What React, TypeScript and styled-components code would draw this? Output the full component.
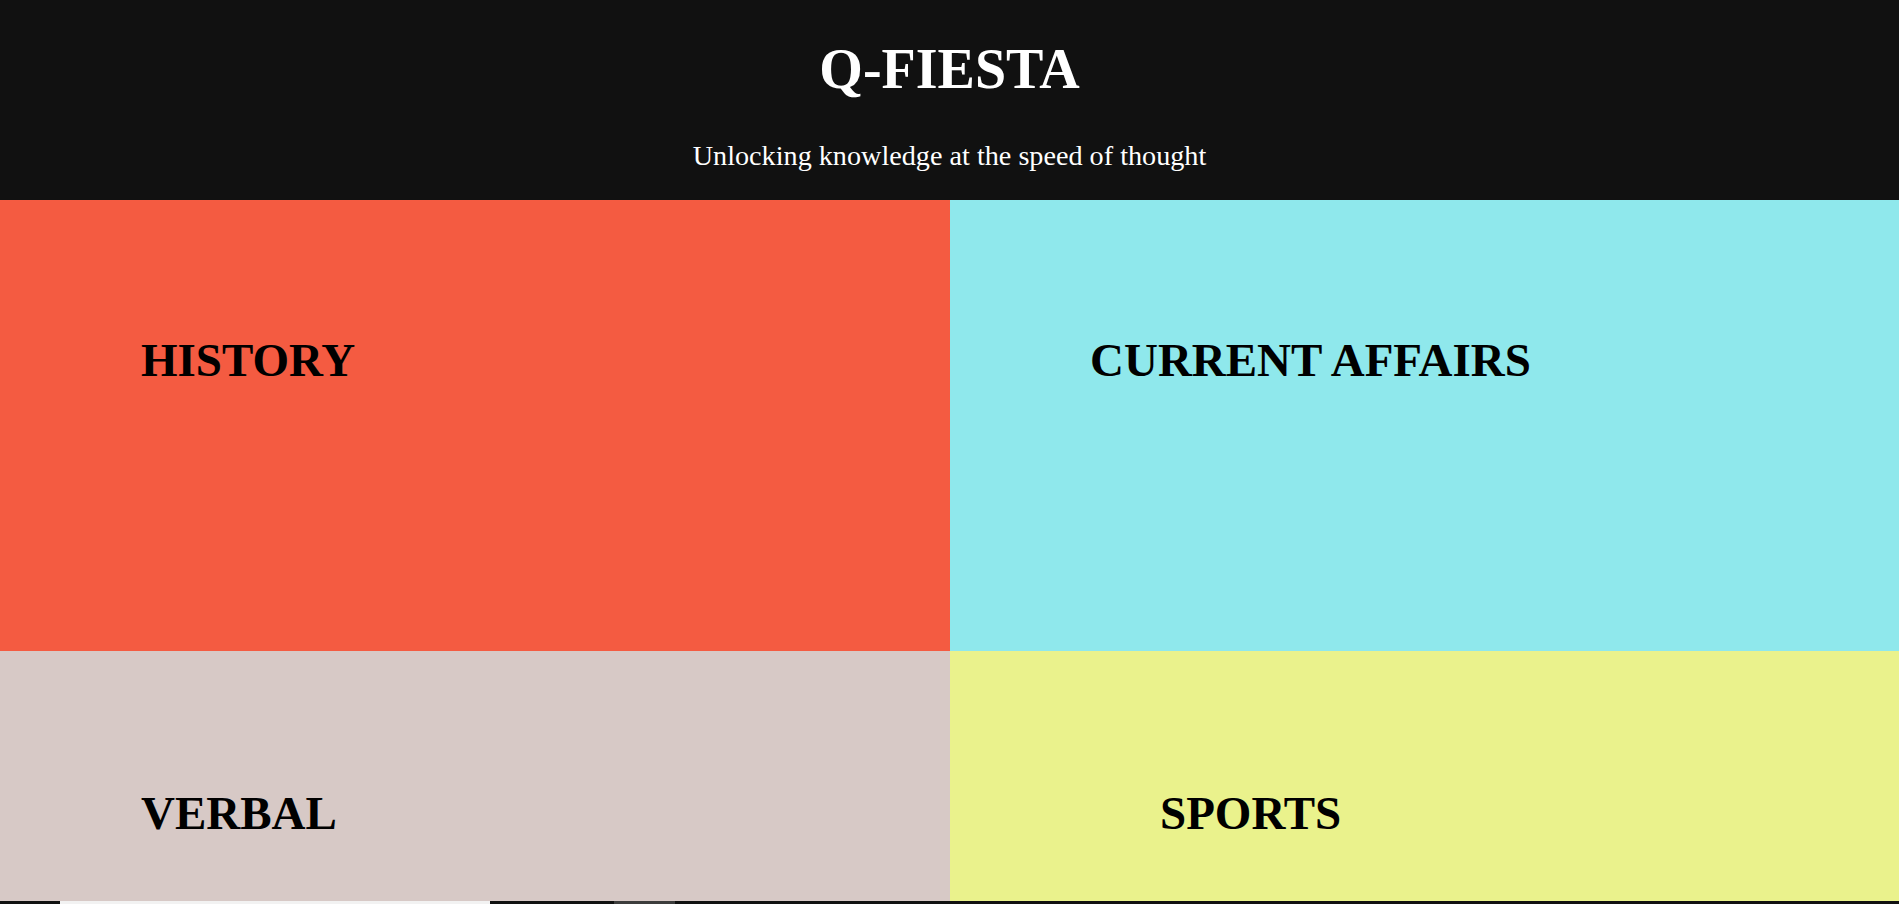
import React from "react";
import styled, { createGlobalStyle } from "styled-components";

const GlobalStyle = createGlobalStyle`
  html, body { margin: 0; padding: 0; background: #111111; }
  body { font-family: "Liberation Serif", "Times New Roman", serif; overflow: hidden; }
  * { box-sizing: border-box; }
`;

const Page = styled.div`
  width: 1899px;
  display: flex;
  flex-direction: column;
`;

const Header = styled.header`
  height: 200px;
  background: #111111;
  color: #ffffff;
  display: flex;
  flex-direction: column;
  align-items: center;
  padding-top: 41px;
`;

const Title = styled.h1`
  margin: 0;
  font-size: 56px;
  line-height: 1;
  font-weight: 700;
`;

const Tagline = styled.p`
  margin: 45px 0 0;
  font-size: 28.2px;
  line-height: 1;
  font-weight: 400;
`;

const Grid = styled.main`
  display: grid;
  grid-template-columns: 950px 949px;
  grid-template-rows: 451px 250px;
`;

const Tile = styled.section<{ $bg: string; $top: number; $left: number }>`
  background: ${(p) => p.$bg};
  padding: ${(p) => p.$top}px 0 0 ${(p) => p.$left}px;
`;

const TileTitle = styled.h2`
  margin: 0;
  font-size: 47px;
  line-height: 1;
  font-weight: 700;
  color: #000000;
`;

const Strip = styled.div`
  height: 3px;
  background: #111111;
  display: flex;
`;

const StripSeg = styled.div<{ $w: number; $ml: number; $bg: string }>`
  width: ${(p) => p.$w}px;
  margin-left: ${(p) => p.$ml}px;
  background: ${(p) => p.$bg};
`;

const tiles = [
  { name: "HISTORY", bg: "#f45b41", top: 137, left: 141 },
  { name: "CURRENT AFFAIRS", bg: "#8fe8ec", top: 137, left: 140 },
  { name: "VERBAL", bg: "#d7c9c6", top: 139, left: 141 },
  { name: "SPORTS", bg: "#eaf28c", top: 139, left: 210 },
];

export default function App() {
  return (
    <Page>
      <GlobalStyle />
      <Header>
        <Title>Q-FIESTA</Title>
        <Tagline>Unlocking knowledge at the speed of thought</Tagline>
      </Header>
      <Grid>
        {tiles.map((t) => (
          <Tile key={t.name} $bg={t.bg} $top={t.top} $left={t.left}>
            <TileTitle>{t.name}</TileTitle>
          </Tile>
        ))}
      </Grid>
      <Strip>
        <StripSeg $w={430} $ml={60} $bg="#f2f2f2" />
        <StripSeg $w={61} $ml={124} $bg="#3c3c3c" />
      </Strip>
    </Page>
  );
}
